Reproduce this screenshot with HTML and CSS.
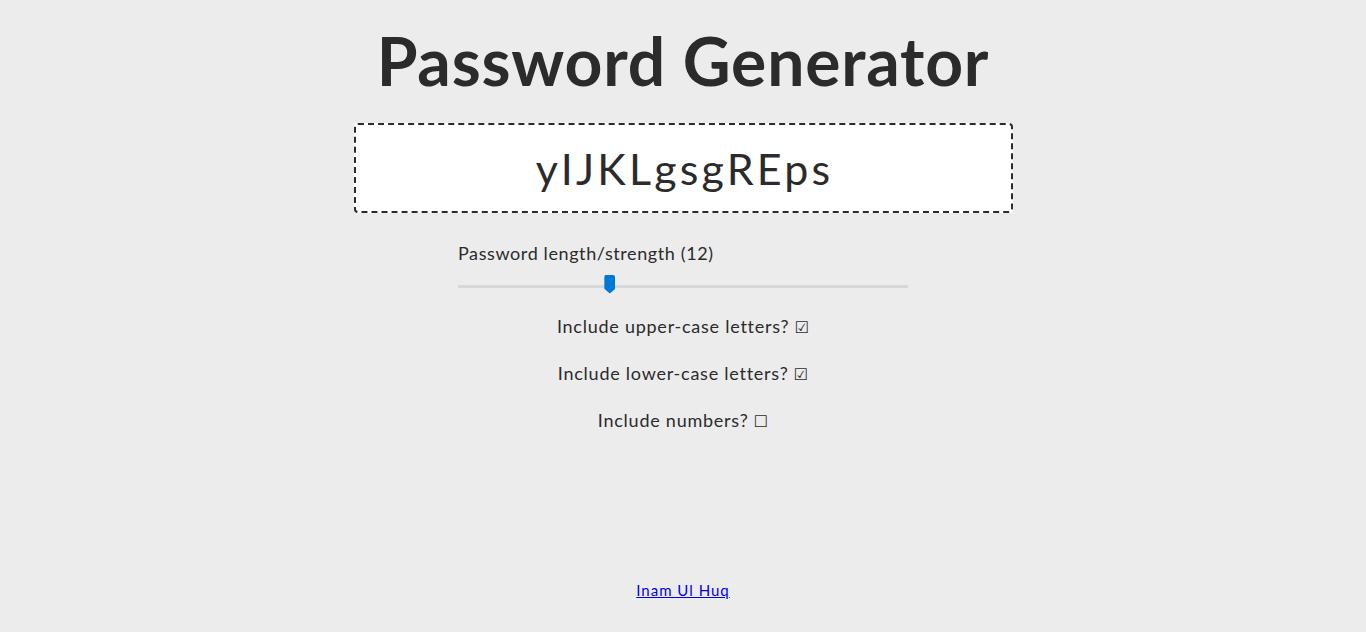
FILE: index.html
```html
<!DOCTYPE html>
<html lang="en">
<head>
<meta charset="utf-8">
<title>Password Generator</title>
<link rel="stylesheet" href="styles.css">
</head>
<body>
<div class="page">
  <main class="app">
    <h1 class="title">Password Generator</h1>
    <div class="output">yIJKLgsgREps</div>
    <div class="length">
      <label class="length-label" for="len">Password length/strength (12)</label>
      <input id="len" class="slider" type="range" min="4" max="28" value="12">
    </div>
    <div class="option first">Include upper-case letters? <span class="box">☑</span></div>
    <div class="option">Include lower-case letters? <span class="box">☑</span></div>
    <div class="option">Include numbers? <span class="box">☐</span></div>
  </main>
  <footer class="footer"><a href="#" class="credit">Inam Ul Huq</a></footer>
</div>
</body>
</html>
```
FILE: styles.css
```css
html, body {
  margin: 0;
  padding: 0;
  background: #ececec;
}
body {
  font-family: Lato, "Open Sans", sans-serif;
  color: #2b2b2b;
}
.page {
  min-height: 632px;
  display: flex;
  flex-direction: column;
  align-items: center;
  box-sizing: border-box;
}
.app {
  display: flex;
  flex-direction: column;
  align-items: center;
}
.title {
  margin: 21px 0 0;
  font-size: 66px;
  font-weight: 700;
  line-height: 80px;
  letter-spacing: 0.8px;
}
.output {
  margin-top: 22px;
  width: 659px;
  height: 90px;
  box-sizing: border-box;
  border: 2px dashed #2b2b2b;
  border-radius: 4px;
  background: #fff;
  display: flex;
  align-items: center;
  justify-content: center;
  font-size: 43px;
  font-weight: 400;
  letter-spacing: 3.2px;
  text-indent: 3.2px;
}
.length {
  width: 450px;
  margin-top: 27px;
  display: flex;
  flex-direction: column;
}
.length-label {
  font-size: 18px;
  line-height: 26px;
  letter-spacing: 0.6px;
}
.slider {
  -webkit-appearance: none;
  appearance: none;
  width: 450px;
  margin: 11px 0 0;
  height: 18px;
  background: transparent;
}
.slider::-webkit-slider-runnable-track {
  height: 3px;
  background: #d8d8d8;
  border: none;
}
.slider::-webkit-slider-thumb {
  -webkit-appearance: none;
  width: 11px;
  height: 19px;
  margin-top: -10px;
  background: #0078d7;
  border: none;
  border-radius: 2px 2px 0 0;
  clip-path: polygon(0 0, 100% 0, 100% 75%, 50% 100%, 0 75%);
}
.option {
  margin-top: 19px;
  font-size: 18px;
  line-height: 26px;
  letter-spacing: 0.75px;
}
.option.first {
  margin-top: 18px;
}
.box {
  font-family: "DejaVu Sans", sans-serif;
  font-size: 16px;
  letter-spacing: 0;
}
.footer {
  margin-top: auto;
  padding-bottom: 33px;
}
.credit {
  color: #0000ee;
  font-size: 15px;
  letter-spacing: 1px;
}
```
